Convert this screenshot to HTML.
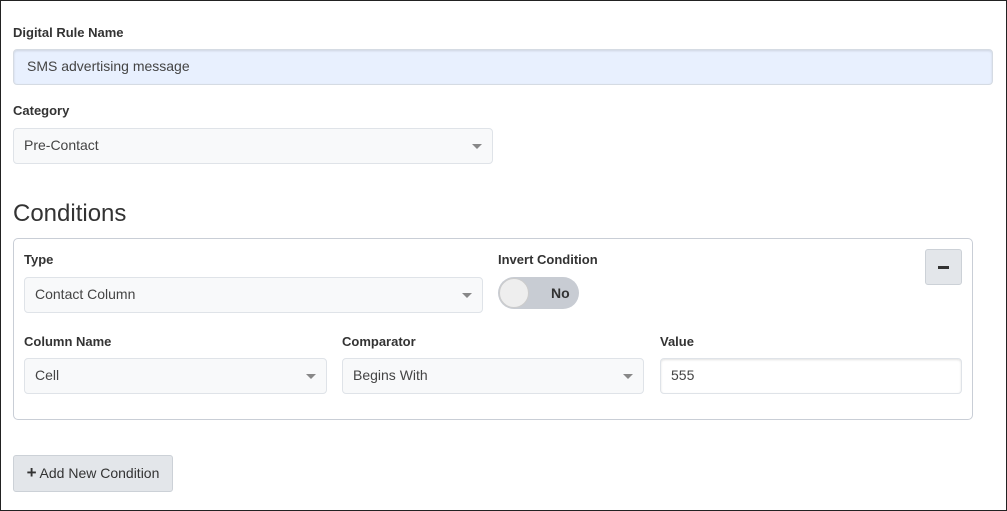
<!DOCTYPE html><html><head><style>
body{margin:0;width:1007px;height:511px;overflow:hidden;background:#fff;font-family:"Liberation Sans",sans-serif;}
.frame{position:absolute;left:0;top:0;width:1005px;height:509px;border:1px solid #222;}
.a{position:absolute;box-sizing:border-box;}
.lbl{position:absolute;font-size:13px;font-weight:bold;color:#333;}
.inp{position:absolute;box-sizing:border-box;border:1px solid #dfe3e8;border-radius:4px;background:#f8f9fa;font-size:14px;color:#444;padding-left:10px;padding-bottom:3px;display:flex;align-items:center;}
.caret{position:absolute;right:10px;top:50%;margin-top:-2px;width:0;height:0;border-left:5px solid transparent;border-right:5px solid transparent;border-top:5px solid #888;}
</style></head><body>
<div class="frame"></div>
<div class="lbl" style="left:13px;top:25px">Digital Rule Name</div>
<div class="inp" style="left:13px;top:49px;width:980px;height:36px;background:#e8f0fe;border-color:#d5dbe3;box-shadow:inset 0 1px 2px rgba(0,0,0,.12);padding-left:13px">SMS advertising message</div>
<div class="lbl" style="left:13px;top:103px">Category</div>
<div class="inp" style="left:13px;top:128px;width:480px;height:36px">Pre-Contact<span class="caret"></span></div>
<div class="a" style="left:13px;top:200px;font-size:24px;color:#333">Conditions</div>
<div class="a" style="left:13px;top:238px;width:960px;height:182px;border:1px solid #c9ced6;border-radius:5px"></div>
<div class="lbl" style="left:24px;top:252px">Type</div>
<div class="inp" style="left:24px;top:277px;width:459px;height:36px">Contact Column<span class="caret"></span></div>
<div class="lbl" style="left:498px;top:252px">Invert Condition</div>
<div class="a" style="left:498px;top:277px;width:81px;height:32px;border-radius:16px;background:#c8ccd3;"></div>
<div class="a" style="left:499px;top:278px;width:30px;height:30px;border-radius:15px;background:#eee;border:1px solid #ccc"></div>
<div class="a" style="left:551px;top:285px;font-size:14px;font-weight:bold;color:#333">No</div>
<div class="a" style="left:925px;top:249px;width:37px;height:36px;background:#e3e6ea;border:1px solid #ccd1d7;border-radius:3px"><div class="a" style="left:12px;top:16px;width:11px;height:3px;background:#333"></div></div>
<div class="lbl" style="left:24px;top:334px">Column Name</div>
<div class="lbl" style="left:342px;top:334px">Comparator</div>
<div class="lbl" style="left:660px;top:334px">Value</div>
<div class="inp" style="left:24px;top:358px;width:303px;height:36px">Cell<span class="caret"></span></div>
<div class="inp" style="left:342px;top:358px;width:302px;height:36px">Begins With<span class="caret"></span></div>
<div class="inp" style="left:660px;top:358px;width:302px;height:36px;background:#fff;box-shadow:inset 0 1px 2px rgba(0,0,0,.12)">555</div>
<div class="a" style="left:13px;top:455px;width:160px;height:37px;background:#e3e6ea;border:1px solid #ccd1d7;border-radius:3px;font-size:14px;color:#333;display:flex;align-items:center;justify-content:center;padding-bottom:2px"><b style="font-size:17px;margin-right:3px">+</b>Add New Condition</div>
</body></html>
